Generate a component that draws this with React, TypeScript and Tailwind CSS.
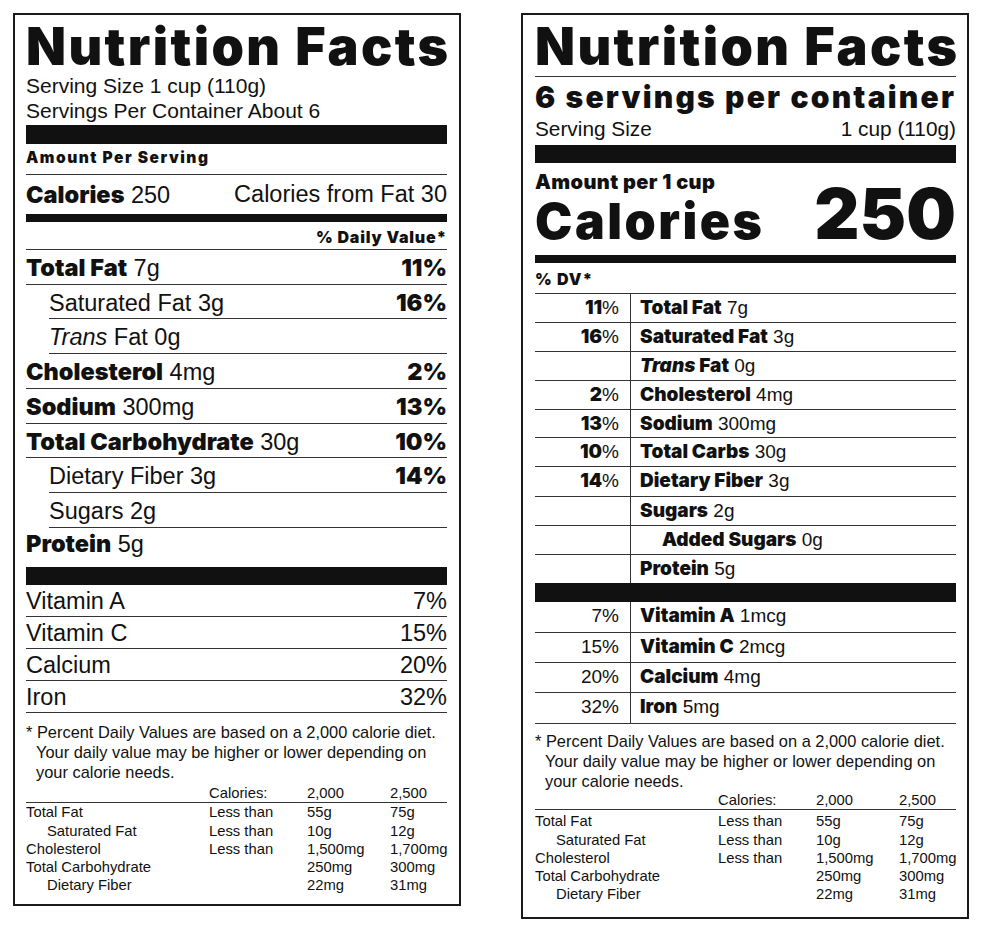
import React from "react";

// heavy face used for headings and nutrient names
const heavy = "font-['Inter','Liberation_Sans',sans-serif] font-black";

type LeftRow = {
  name: string;
  amt: string;
  dv?: string;
  bold?: boolean;
  indent?: boolean;
  italic?: boolean;
  h: string;
};

const leftNutrients: LeftRow[] = [
  { name: "Total Fat", amt: "7g", dv: "11%", bold: true, h: "h-[35px]" },
  { name: "Saturated Fat", amt: "3g", dv: "16%", indent: true, h: "h-[34px]" },
  { name: "Fat", amt: "0g", indent: true, italic: true, h: "h-[35px]" },
  { name: "Cholesterol", amt: "4mg", dv: "2%", bold: true, h: "h-[35px]" },
  { name: "Sodium", amt: "300mg", dv: "13%", bold: true, h: "h-[35px]" },
  { name: "Total Carbohydrate", amt: "30g", dv: "10%", bold: true, h: "h-[34px]" },
  { name: "Dietary Fiber", amt: "3g", dv: "14%", indent: true, h: "h-[35px]" },
  { name: "Sugars", amt: "2g", indent: true, h: "h-[35px]" },
];

const leftVitamins = [
  { name: "Vitamin A", dv: "7%" },
  { name: "Vitamin C", dv: "15%" },
  { name: "Calcium", dv: "20%" },
  { name: "Iron", dv: "32%" },
];

type RightRow = {
  dv?: string;
  name: string;
  amt: string;
  italic?: boolean;
  deep?: boolean;
  last?: boolean;
  h: string;
};

const rightNutrients: RightRow[] = [
  { dv: "11", name: "Total Fat", amt: "7g", h: "h-[29px]" },
  { dv: "16", name: "Saturated Fat", amt: "3g", h: "h-[29px]" },
  { name: "Fat", amt: "0g", italic: true, h: "h-[29px]" },
  { dv: "2", name: "Cholesterol", amt: "4mg", h: "h-[29px]" },
  { dv: "13", name: "Sodium", amt: "300mg", h: "h-[28px]" },
  { dv: "10", name: "Total Carbs", amt: "30g", h: "h-[29px]" },
  { dv: "14", name: "Dietary Fiber", amt: "3g", h: "h-[30px]" },
  { name: "Sugars", amt: "2g", h: "h-[29px]" },
  { name: "Added Sugars", amt: "0g", deep: true, h: "h-[29px]" },
  { name: "Protein", amt: "5g", last: true, h: "h-[28px]" },
];

const rightVitamins = [
  { dv: "7%", name: "Vitamin A", amt: "1mcg", h: "h-[31px]" },
  { dv: "15%", name: "Vitamin C", amt: "2mcg", h: "h-[30px]" },
  { dv: "20%", name: "Calcium", amt: "4mg", h: "h-[30px]" },
  { dv: "32%", name: "Iron", amt: "5mg", h: "h-[31px]" },
];

const limits = [
  { name: "Total Fat", less: "Less than", a: "55g", b: "75g" },
  { name: "Saturated Fat", less: "Less than", a: "10g", b: "12g", indent: true },
  { name: "Cholesterol", less: "Less than", a: "1,500mg", b: "1,700mg" },
  { name: "Total Carbohydrate", less: "", a: "250mg", b: "300mg" },
  { name: "Dietary Fiber", less: "", a: "22mg", b: "31mg", indent: true },
];

function Footnote({ top }: { top: string }) {
  return (
    <div className={`${top} text-[16.4px] leading-[20px] pl-[10px] -indent-[10px]`}>
      * Percent Daily Values are based on a 2,000 calorie diet.
      <br />
      Your daily value may be higher or lower depending on
      <br />
      your calorie needs.
    </div>
  );
}

function LimitsTable({ top, rowsTop }: { top: string; rowsTop: string }) {
  return (
    <div className="text-[14.8px] leading-[18.3px]">
      <div className={`${top} grid grid-cols-[183px_98px_83px_1fr] border-b border-[#333]`}>
        <span />
        <span>Calories:</span>
        <span>2,000</span>
        <span>2,500</span>
      </div>
      <div className={rowsTop}>
        {limits.map((r) => (
          <div key={r.name} className="grid grid-cols-[183px_98px_83px_1fr] whitespace-nowrap">
            <span className={r.indent ? "pl-[21px]" : ""}>{r.name}</span>
            <span>{r.less}</span>
            <span>{r.a}</span>
            <span>{r.b}</span>
          </div>
        ))}
      </div>
    </div>
  );
}

function ClassicLabel() {
  return (
    <div className="w-[448px] h-[893px] shrink-0 border-2 border-[#1a1a1a] pl-[11px] pr-[12px]">
      <div className={`${heavy} h-[58px] pt-[6px] text-[52px] leading-[52px] tracking-[2.4px] whitespace-nowrap`}>
        Nutrition Facts
      </div>
      <div className="text-[21px] leading-[25px]">
        <div>Serving Size 1 cup (110g)</div>
        <div>Servings Per Container About 6</div>
      </div>
      <div className="mt-[2px] h-[19px] bg-[#111]" />
      <div className={`${heavy} h-[31px] border-b border-[#333] text-[15.5px] leading-[27px] tracking-[1.5px]`}>
        Amount Per Serving
      </div>
      <div className="h-[39px] flex justify-between text-[23.5px] leading-[39px]">
        <span>
          <span className={heavy}>Calories</span> 250
        </span>
        <span>Calories from Fat 30</span>
      </div>
      <div className="h-[8px] bg-[#111]" />
      <div
        className={`${heavy} h-[28px] border-b border-[#333] text-right text-[16px] leading-[30px] tracking-[0.8px]`}
      >
        % Daily Value*
      </div>

      {leftNutrients.map((n) => (
        <div key={n.name} className={n.indent ? "pl-[23px]" : ""}>
          <div
            className={`${n.h} border-b border-[#333] flex justify-between text-[23.5px] leading-[36px] whitespace-nowrap`}
          >
            <span>
              {n.italic && <i>Trans </i>}
              {n.bold ? <span className={heavy}>{n.name}</span> : n.name} {n.amt}
            </span>
            {n.dv && <span className={heavy}>{n.dv}</span>}
          </div>
        </div>
      ))}
      <div className="h-[39px] text-[23.5px] leading-[32px]">
        <span className={heavy}>Protein</span> 5g
      </div>
      <div className="h-[18px] bg-[#111]" />

      {leftVitamins.map((v) => (
        <div
          key={v.name}
          className="h-[32px] border-b border-[#333] flex justify-between text-[23.5px] leading-[32px]"
        >
          <span>{v.name}</span>
          <span>{v.dv}</span>
        </div>
      ))}

      <Footnote top="mt-[9px]" />
      <LimitsTable top="mt-[2px]" rowsTop="pt-0" />
    </div>
  );
}

function NewLabel() {
  return (
    <div className="w-[448px] h-[906px] shrink-0 border-2 border-[#1a1a1a] pl-[12px] pr-[11px]">
      <div
        className={`${heavy} h-[62px] pt-[6px] border-b border-[#333] text-[52px] leading-[52px] tracking-[2.4px] whitespace-nowrap`}
      >
        Nutrition Facts
      </div>
      <div className={`${heavy} h-[41px] text-[30px] leading-[41px] tracking-[2.2px] whitespace-nowrap`}>
        6 servings per container
      </div>
      <div className="h-[24px] flex justify-between text-[20.8px] leading-[22px]">
        <span>Serving Size</span>
        <span>1 cup (110g)</span>
      </div>
      <div className="mt-[3px] h-[18px] bg-[#111]" />
      <div className={`${heavy} h-[92px] pt-[7px]`}>
        <div className="text-[20px] leading-[24px] tracking-[0.4px]">Amount per 1 cup</div>
        <div className="flex items-baseline justify-between">
          <span className="text-[50px] leading-[54px] tracking-[2.5px]">Calories</span>
          <span className="text-[70px] leading-[38px]">250</span>
        </div>
      </div>
      <div className="h-[8px] bg-[#111]" />
      <div className={`${heavy} h-[31px] border-b border-[#333] text-[16px] leading-[32px] tracking-[1px]`}>
        % DV*
      </div>

      {rightNutrients.map((n) => (
        <div
          key={n.name}
          className={`${n.h} flex ${n.last ? "" : "border-b border-[#333]"} text-[19px] leading-[28px] whitespace-nowrap`}
        >
          <div className="w-[96px] shrink-0 border-r border-[#333] pr-[11px] text-right">
            {n.dv && (
              <>
                <span className={heavy}>{n.dv}</span>%
              </>
            )}
          </div>
          <div className={n.deep ? "pl-[31px]" : "pl-[9px]"}>
            <span className={heavy}>
              {n.italic && <i>Trans </i>}
              {n.name}
            </span>{" "}
            {n.amt}
          </div>
        </div>
      ))}
      <div className="h-[19px] bg-[#111]" />

      {rightVitamins.map((v) => (
        <div
          key={v.name}
          className={`${v.h} flex border-b border-[#333] text-[19px] leading-[28px] whitespace-nowrap`}
        >
          <div className="w-[96px] shrink-0 border-r border-[#333] pr-[11px] text-right">{v.dv}</div>
          <div className="pl-[9px]">
            <span className={heavy}>{v.name}</span> {v.amt}
          </div>
        </div>
      ))}

      <Footnote top="mt-[7px]" />
      <LimitsTable top="mt-0" rowsTop="pt-[2px]" />
    </div>
  );
}

export default function App() {
  return (
    <div className="w-[1000px] h-[933px] bg-white text-[#111] font-['Liberation_Sans',Arial,sans-serif] flex gap-[60px] pl-[13px] pt-[13px]">
      <ClassicLabel />
      <NewLabel />
    </div>
  );
}
